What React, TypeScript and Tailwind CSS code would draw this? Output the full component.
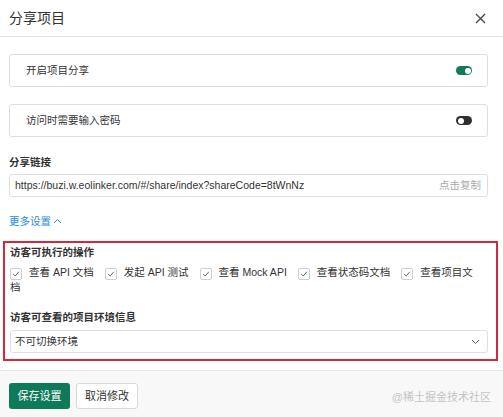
import React from 'react';

const font = { fontFamily: '"Liberation Sans", "Noto Sans CJK SC", sans-serif' };

function Toggle({ on }: { on: boolean }) {
  return (
    <span
      className={`flex h-[9px] w-[16px] items-center rounded-full px-[1.5px] ${
        on ? 'justify-end bg-[#0e7c5b]' : 'justify-start bg-[#2f2f2f]'
      }`}
    >
      <span className="h-[6px] w-[6px] rounded-full bg-white" />
    </span>
  );
}

function Check() {
  return (
    <span className="mr-[7px] inline-flex h-[12px] w-[12px] items-center justify-center rounded-[2px] border border-[#cfcfcf] bg-white align-[-2px]">
      <svg width="8" height="8" viewBox="0 0 8 8" fill="none">
        <path d="M1.2 4.2 L3.2 6 L6.8 1.8" stroke="#555" strokeWidth="0.9" />
      </svg>
    </span>
  );
}

const actions = ['查看 API 文档', '发起 API 测试', '查看 Mock API', '查看状态码文档'];

export default function App() {
  return (
    <div style={font} className="flex h-[417px] w-[503px] flex-col overflow-hidden bg-white text-[10.5px] text-[#333]">
      {/* Header */}
      <div className="flex h-[37px] shrink-0 items-center justify-between border-b border-[#e3e3e3] pl-[9px] pr-[17px]">
        <span className="text-[14px] text-[#333]">分享项目</span>
        <svg width="11" height="11" viewBox="0 0 11 11" fill="none">
          <path d="M1 1 L10 10 M10 1 L1 10" stroke="#444" strokeWidth="1.3" />
        </svg>
      </div>

      <div className="pl-[9px] pr-[15px] pt-[17px]">
        <div className="flex h-[33px] items-center justify-between rounded-[3px] border border-[#dedede] pl-[16px] pr-[15px]">
          <span>开启项目分享</span>
          <Toggle on />
        </div>
        <div className="mt-[17px] flex h-[33px] items-center justify-between rounded-[3px] border border-[#dedede] pl-[16px] pr-[15px]">
          <span>访问时需要输入密码</span>
          <Toggle on={false} />
        </div>

        <div className="mt-[17px] font-bold leading-[16px]">分享链接</div>
        <div className="mt-[4px] flex h-[23px] items-center justify-between rounded-[3px] border border-[#dedede] pl-[5px] pr-[6px]">
          <span className="text-[#333]">https://buzi.w.eolinker.com/#/share/index?shareCode=8tWnNz</span>
          <span className="text-[#aaa]">点击复制</span>
        </div>

        <div className="mt-[16px] flex items-center gap-[2px] leading-[16px] text-[#1e8ce6]">
          <span>更多设置</span>
          <svg width="9" height="6" viewBox="0 0 9 6" fill="none">
            <path d="M1 5 L4.5 1.5 L8 5" stroke="#1e8ce6" strokeWidth="1" />
          </svg>
        </div>

        {/* Guest settings (highlighted) */}
        <div className="ml-[-6px] mr-[-10px] mt-[12px] border-2 border-[#d5283b] pb-[6px] pl-[5px] pr-[8px] pt-[1px]">
          <div className="font-bold leading-[16px]">访客可执行的操作</div>
          <div className="mr-[6px] mt-[5px] leading-[15px]">
            {actions.map((a) => (
              <span key={a} className="mr-[11px] whitespace-nowrap">
                <Check />
                {a}
              </span>
            ))}
            <Check />
            查看项目文档
          </div>
          <div className="mt-[14px] font-bold leading-[16px]">访客可查看的项目环境信息</div>
          <div className="mt-[5px] flex h-[23px] items-center justify-between rounded-[3px] border border-[#dedede] pl-[4px] pr-[7px]">
            <span>不可切换环境</span>
            <svg width="9" height="6" viewBox="0 0 9 6" fill="none">
              <path d="M1 1 L4.5 4.5 L8 1" stroke="#666" strokeWidth="1" />
            </svg>
          </div>
        </div>
      </div>

      {/* Footer */}
      <div className="mt-[9px] flex flex-1 items-start justify-between border-t border-[#e8e8e8] bg-[#f8f8f8] pl-[9px] pr-[12px] pt-[12px]">
        <div className="flex gap-[6px]">
          <button className="h-[26px] w-[61px] rounded-[3px] bg-[#0f7a5a] text-[11px] text-white">保存设置</button>
          <button className="h-[26px] w-[62px] rounded-[3px] border border-[#d9d9d9] bg-white text-[11px] text-[#333]">取消修改</button>
        </div>
        <span className="mt-[6px] text-[11px] text-[#c4c4c4]">@稀土掘金技术社区</span>
      </div>
    </div>
  );
}
